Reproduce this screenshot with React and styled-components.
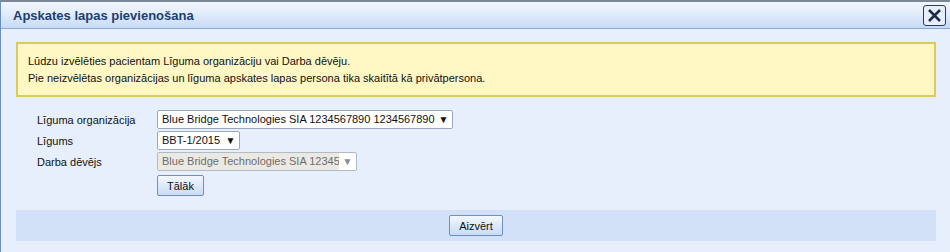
import styled, { createGlobalStyle } from "styled-components";

const Global = createGlobalStyle`
body {
  margin: 0;
  font-family: Tahoma, "DejaVu Sans", sans-serif;
}
`

const Window = styled.div`
width: 950px;
height: 252px;
box-sizing: border-box;
border-top: 2px solid #7c8896;
border-left: 1px solid #6a8ec4;
background: #e8effc;
font-family: "Liberation Sans", Arial, sans-serif;
font-size: 11px;
color: #111;
`
const TitleBar = styled.div`
height: 26px;
display: flex;
align-items: center;
justify-content: space-between;
padding: 0 4px 0 12px;
background: linear-gradient(#f2f6fd, #e2ecfb 45%, #c6daf6);
border-bottom: 1px solid #8caad4;
`
const Title = styled.h1`
margin: 0;
font-size: 13px;
font-weight: bold;
color: #1b3f73;
`
const CloseButton = styled.button`
width: 23px;
height: 21px;
padding: 0;
display: flex;
align-items: center;
justify-content: center;
border: 1px solid #2a3b5c;
border-radius: 3px;
background: #e7effb;
`
const Content = styled.div`
padding: 13px 14px 0 15px;
`
const Notice = styled.div`
border: 2px solid #dccb5c;
background: #fff8c4;
padding: 9px 10px 8px;
line-height: 17px;
`
const Form = styled.div`
display: grid;
grid-template-columns: 120px auto;
row-gap: 2px;
align-items: center;
justify-items: start;
margin-top: 13px;
padding-left: 21px;
`
const Label = styled.span`
font-size: 11px;
`
const Select = styled.div`
height: 19px;
box-sizing: border-box;
display: flex;
align-items: center;
border: 1px solid ${p => p.disabled ? "#b4bac4" : "#9aa8bf"};
border-radius: 2px;
background: #fff;
width: ${p => p.width}px;
overflow: hidden;
`
const SelectText = styled.span`
flex: 1;
min-width: 0;
padding-left: 4px;
white-space: nowrap;
overflow: hidden;
text-overflow: clip;
height: 100%;
line-height: 17px;
color: ${p => p.disabled ? "#6d6d6d" : "#111"};
background: ${p => p.disabled ? "#ebe9e4" : "#fff"};
`
const Arrow = styled.span`
flex: none;
width: 17px;
text-align: center;
font-size: 10px;
color: ${p => p.disabled ? "#8a8a8a" : "#111"};
`
const Button = styled.button`
font-family: "Liberation Sans", Arial, sans-serif;
font-size: 11px;
color: #111;
height: 21px;
padding: 0 9px;
border: 1px solid #6f8fbf;
border-radius: 2px;
background: linear-gradient(#f3f8fe, #dbe8fa 55%, #c9dcf6);
`
const NextButton = styled(Button)`
grid-column: 2;
margin-top: 2px;
`
const Footer = styled.div`
margin-top: 14px;
height: 31px;
background: #d2e1f8;
display: flex;
align-items: center;
justify-content: center;
`

function Dropdown({ value, width, disabled }) {
    return (
        <Select width={width} disabled={disabled}>
            <SelectText disabled={disabled}>{value}</SelectText>
            <Arrow disabled={disabled}>▼</Arrow>
        </Select>
    )
}

export default function App() {
    return (
        <>
        <Global />
        <Window>
            <TitleBar>
                <Title>Apskates lapas pievienošana</Title>
                <CloseButton>
                    <svg width="15" height="15" viewBox="0 0 15 15">
                        <path d="M2 2 L13 13 M13 2 L2 13" stroke="#1d2c4a" strokeWidth="2.6" />
                    </svg>
                </CloseButton>
            </TitleBar>
            <Content>
                <Notice>
                    Lūdzu izvēlēties pacientam Līguma organizāciju vai Darba dēvēju.<br />
                    Pie neizvēlētas organizācijas un līguma apskates lapas persona tika skaitītā kā privātpersona.
                </Notice>
                <Form>
                    <Label>Līguma organizācija</Label>
                    <Dropdown width={296} value="Blue Bridge Technologies SIA 1234567890 1234567890" />
                    <Label>Līgums</Label>
                    <Dropdown width={83} value="BBT-1/2015" />
                    <Label>Darba dēvējs</Label>
                    <Dropdown width={200} disabled value="Blue Bridge Technologies SIA 1234567890" />
                    <NextButton>Tālāk</NextButton>
                </Form>
                <Footer>
                    <Button>Aizvērt</Button>
                </Footer>
            </Content>
        </Window>
        </>
    )
}
